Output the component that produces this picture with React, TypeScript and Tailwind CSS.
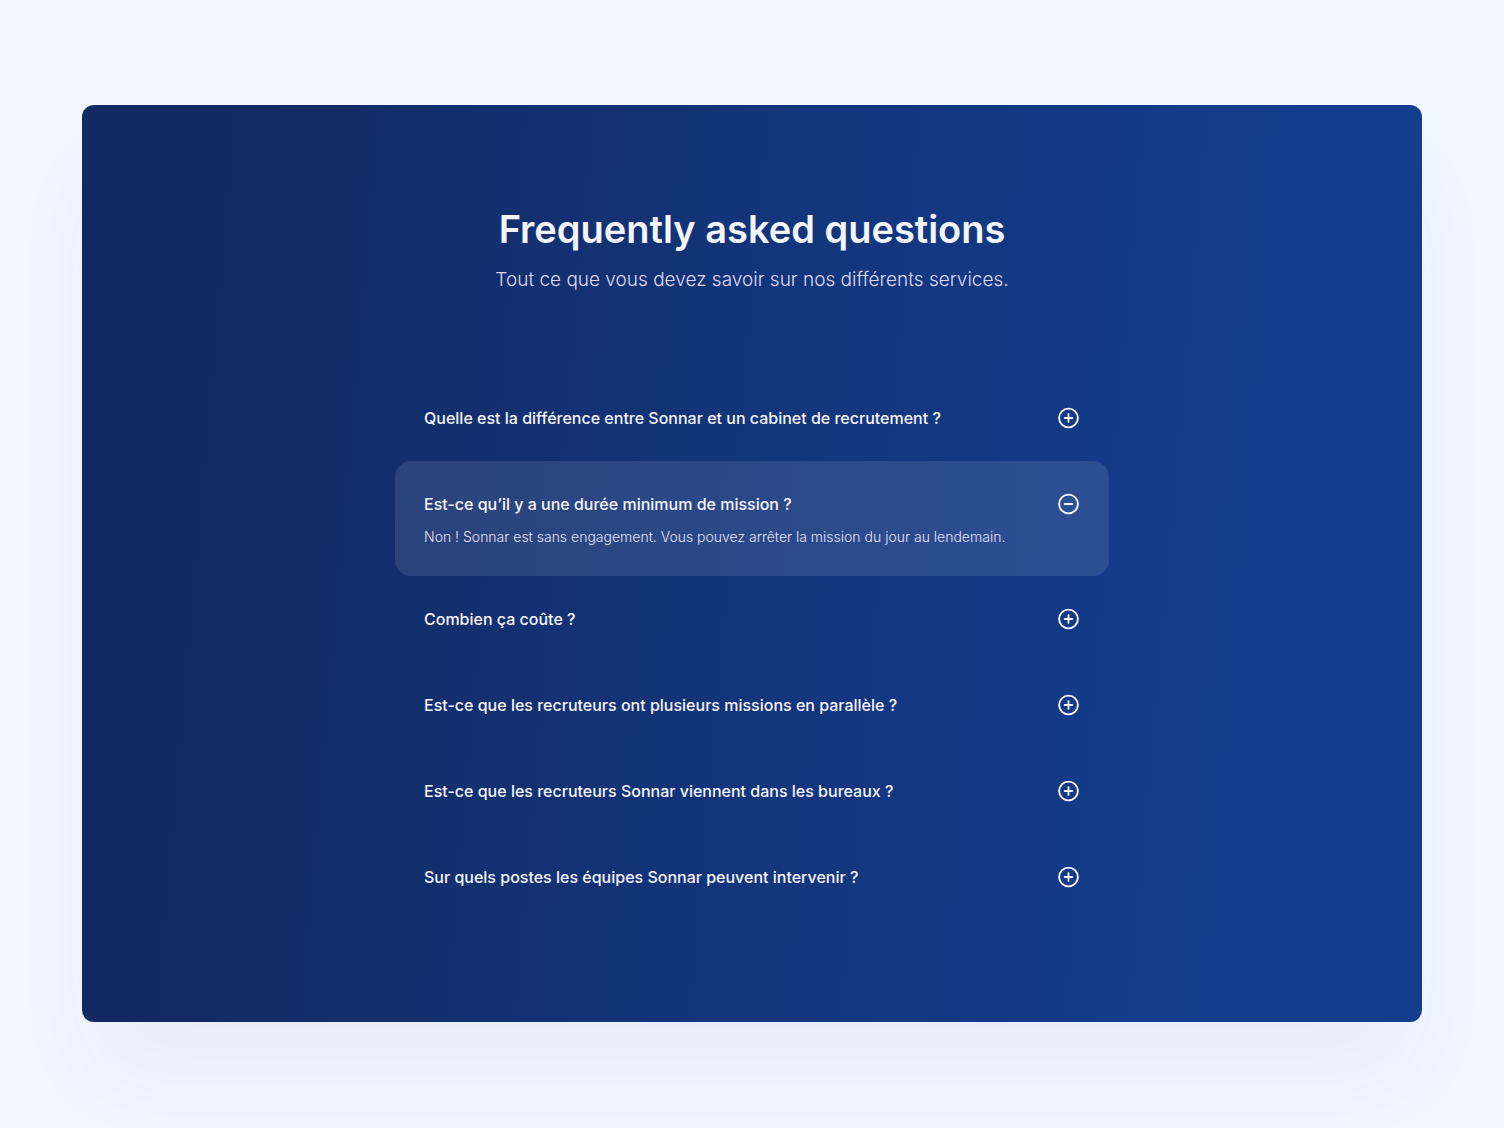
import { useState } from "react";

interface FaqItem {
  question: string;
  answer: string;
}

const FAQ: FaqItem[] = [
  {
    question: "Quelle est la différence entre Sonnar et un cabinet de recrutement ?",
    answer: "",
  },
  {
    question: "Est-ce qu’il y a une durée minimum de mission ?",
    answer:
      "Non ! Sonnar est sans engagement. Vous pouvez arrêter la mission du jour au lendemain.",
  },
  { question: "Combien ça coûte ?", answer: "" },
  {
    question: "Est-ce que les recruteurs ont plusieurs missions en parallèle ?",
    answer: "",
  },
  {
    question: "Est-ce que les recruteurs Sonnar viennent dans les bureaux ?",
    answer: "",
  },
  {
    question: "Sur quels postes les équipes Sonnar peuvent intervenir ?",
    answer: "",
  },
];

function ToggleIcon({ open }: { open: boolean }) {
  return (
    <svg
      viewBox="0 0 22 22"
      className="h-[22px] w-[22px] shrink-0"
      fill="none"
      stroke="currentColor"
      strokeWidth="1.9"
      strokeLinecap="round"
      aria-hidden="true"
    >
      <circle cx="10.5" cy="11" r="9.4" />
      <path d="M6.7 11h7.6" />
      {!open && <path d="M10.5 7.2v7.6" />}
    </svg>
  );
}

interface FaqRowProps {
  item: FaqItem;
  open: boolean;
  onToggle: () => void;
}

function FaqRow({ item, open, onToggle }: FaqRowProps) {
  return (
    <li
      className={`rounded-2xl px-[29px] pt-8 ${open ? "bg-white/10 pb-[29px]" : "pb-8"}`}
    >
      <button
        type="button"
        aria-expanded={open}
        onClick={onToggle}
        className="flex w-full cursor-pointer items-center justify-between gap-6 text-left text-[#f6f5ff]"
      >
        <span className="text-base leading-[22px] font-medium">
          {item.question}
        </span>
        <ToggleIcon open={open} />
      </button>
      {open && item.answer && (
        <p className="mt-[11px] text-sm leading-[21px] font-light text-[#e2e1fa]">
          {item.answer}
        </p>
      )}
    </li>
  );
}

export default function App() {
  const [openIndex, setOpenIndex] = useState<number | null>(1);

  return (
    <main className="min-h-screen bg-[#f0f7ff] px-5 pt-[105px] pb-[106px] font-['Inter','Liberation_Sans',sans-serif] md:px-[82px]">
      <section className="rounded-xl bg-linear-[95deg,#132962_9%,#13357b_50%,#143d8d_86%] px-6 pt-[99px] pb-[102px] shadow-[0_60px_90px_-10px_rgba(80,50,170,0.05)]">
        <header className="text-center">
          <h1 className="text-[38px] leading-[50px] font-semibold text-[#f3f5ff]">
            Frequently asked questions
          </h1>
          <p className="mt-[10px] text-[19px] leading-8 font-light text-[#dedaf6]">
            Tout ce que vous devez savoir sur nos différents services.
          </p>
        </header>

        <ul className="mx-auto mt-[79px] max-w-[714px]">
          {FAQ.map((item, i) => (
            <FaqRow
              key={item.question}
              item={item}
              open={openIndex === i}
              onToggle={() => setOpenIndex(openIndex === i ? null : i)}
            />
          ))}
        </ul>
      </section>
    </main>
  );
}
